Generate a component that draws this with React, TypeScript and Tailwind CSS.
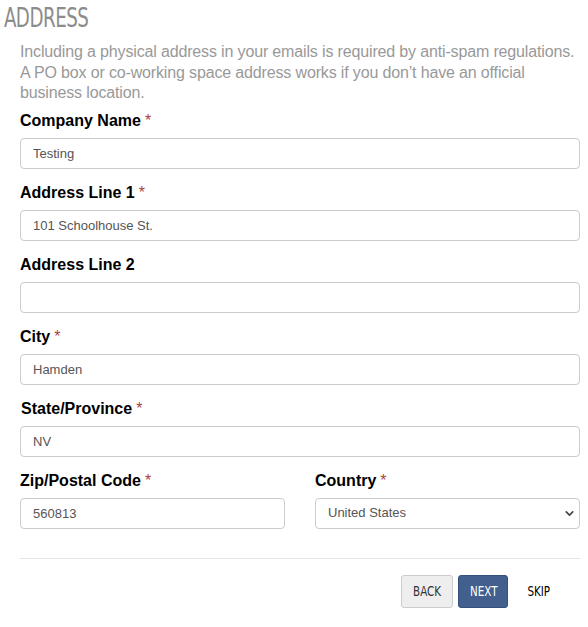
import { ChevronDown } from "lucide-react"

type FieldProps = {
  label: string
  value: string
  required?: boolean
  className?: string
}

const Field = ({ label, value, required, className }: FieldProps) => {
  return (
    <div className={className}>
      <div className="mb-[6px] h-[22px] text-[16px] leading-[22px] font-bold text-black">
        {label}
        {required && <span className="ml-1 font-normal text-[#a94442]">*</span>}
      </div>
      <input
        className="h-[31px] w-full rounded-[4px] border border-[#ccc] bg-white px-3 text-[13px] text-[#555] outline-none"
        value={value}
        onChange={() => {}}
        type="text"
      />
    </div>
  )
}

const condensed = "font-['DejaVu_Sans_Condensed','Liberation_Sans_Narrow',sans-serif]"

export default function App() {
  return (
    <div className="w-[588px] bg-white font-['Liberation_Sans',Arial,sans-serif]">
      <h1
        className={`${condensed} origin-left scale-x-[0.78] pt-[3px] pl-[5px] text-[26px] leading-[30px] font-light tracking-tight text-[#8c8c8c]`}
      >
        ADDRESS
      </h1>
      <div className="pr-2 pl-5">
        <p className="mt-[9px] text-[16px] leading-[20.5px] tracking-[-0.15px] whitespace-nowrap text-[#999]">
          Including a physical address in your emails is required by anti-spam regulations.
          <br />
          A PO box or co-working space address works if you don’t have an official
          <br />
          business location.
        </p>
        <div className="mt-[6px] flex flex-col gap-[13px]">
          <Field label="Company Name" value="Testing" required />
          <Field label="Address Line 1" value="101 Schoolhouse St." required />
          <Field label="Address Line 2" value="" />
          <Field label="City" value="Hamden" required />
          <Field label="State/Province" value="NV" required className="[&>div]:pl-px" />
          <div className="grid grid-cols-2 gap-[30px]">
            <Field label="Zip/Postal Code" value="560813" required />
            <div>
              <div className="mb-[6px] h-[22px] text-[16px] leading-[22px] font-bold text-black">
                Country<span className="ml-1 font-normal text-[#a94442]">*</span>
              </div>
              <div className="relative">
                <select
                  className="h-[31px] w-full appearance-none rounded-[4px] border border-[#ccc] bg-white px-3 text-[13px] text-[#555] outline-none"
                  defaultValue="US"
                >
                  <option value="US">United States</option>
                  <option value="CA">Canada</option>
                </select>
                <ChevronDown
                  className="pointer-events-none absolute top-[9px] right-[4px] h-[13px] w-[13px] text-[#444]"
                  strokeWidth={3}
                />
              </div>
            </div>
          </div>
        </div>
        <hr className="mt-[29px] border-t border-[#e5e5e5]" />
        <div className="mt-4 flex items-center justify-end gap-[5px] pr-[27px]">
          <button className="h-[33px] w-[52px] rounded-[3px] border border-[#ccc] bg-[#eee] text-[#333]">
            <span className={`${condensed} inline-block scale-x-[0.82] text-[14px]`}>BACK</span>
          </button>
          <button className="h-[33px] w-[50px] rounded-[3px] border border-[#34507c] bg-[#425f8e] text-white">
            <span className={`${condensed} inline-block scale-x-[0.82] text-[14px]`}>NEXT</span>
          </button>
          <button className="ml-[12px] text-black">
            <span className={`${condensed} inline-block scale-x-[0.82] text-[14px]`}>SKIP</span>
          </button>
        </div>
      </div>
    </div>
  )
}
